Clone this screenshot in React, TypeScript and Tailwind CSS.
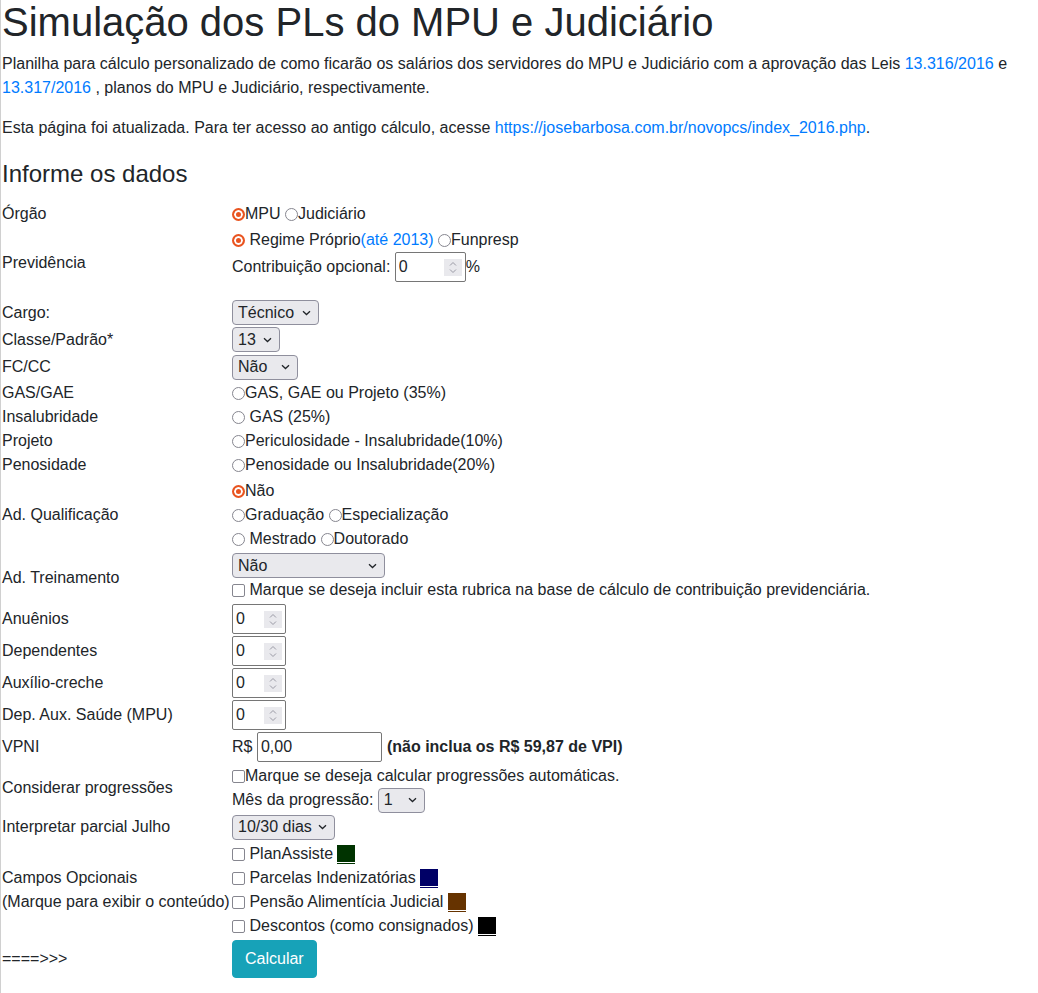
import type { ReactNode } from "react";

const Radio = ({ name, checked }: { name: string; checked?: boolean }) => (
  <input
    type="radio"
    name={name}
    defaultChecked={checked}
    className="m-0 h-[13px] w-[13px] appearance-none rounded-full border-[1.5px] border-[#86868f] bg-white align-middle checked:border-2 checked:border-[#e95420] checked:bg-[#e95420] checked:shadow-[inset_0_0_0_2px_#fff]"
  />
);

const Check = () => (
  <input
    type="checkbox"
    className="m-0 h-[13px] w-[13px] appearance-none rounded-[2px] border-[1.5px] border-[#86868f] bg-white align-middle"
  />
);

const Chevron = () => (
  <svg width="9" height="6" viewBox="0 0 9 6" className="pointer-events-none absolute right-[8px] top-1/2 -translate-y-1/2">
    <path d="M1 1.2l3.5 3.3 3.5-3.3" fill="none" stroke="#212529" strokeWidth="1.3" />
  </svg>
);

const Select = ({ value, width, options }: { value: string; width: string; options: string[] }) => (
  <span className="relative inline-block align-middle">
    <select
      defaultValue={value}
      className={`${width} block h-[25px] appearance-none rounded-[4px] border border-[#8f8f9d] bg-[#e9e9ed] pl-[5px] text-[16px] leading-none text-[#212529] outline-none`}
    >
      {options.map((o) => (
        <option key={o}>{o}</option>
      ))}
    </select>
    <Chevron />
  </span>
);

const Spinner = () => (
  <span className="flex h-[17px] w-[18px] items-center justify-center bg-[#e9e9ed]">
    <svg width="10" height="13" viewBox="0 0 10 13">
      <path d="M2 4.5l3-3 3 3M2 8.5l3 3 3-3" fill="none" stroke="#9a9aa5" strokeWidth="1" />
    </svg>
  </span>
);

const NumberBox = ({ width }: { width: string }) => (
  <span className={`${width} inline-flex h-[30px] items-center rounded-[2px] border border-[#767676] bg-white pl-[3px] pr-[3px] align-middle`}>
    <input defaultValue="0" className="w-full min-w-0 flex-1 bg-transparent text-[16px] text-[#212529] outline-none" />
    <Spinner />
  </span>
);

const Swatch = ({ color }: { color: string }) => (
  <span className={`${color} inline-block h-[19px] w-[18px] border-b bg-clip-content pb-px align-[-5px]`} />
);

const Row = ({ label, children }: { label: ReactNode; children: ReactNode }) => (
  <>
    <div className="flex items-center">{label}</div>
    <div className="pl-px">{children}</div>
  </>
);

const Line = ({ children }: { children: ReactNode }) => <div className="h-6 whitespace-nowrap">{children}</div>;

export default function App() {
  return (
    <div className="min-h-screen border-l border-[#d0d0d0] bg-white pl-px font-['Liberation_Sans',Arial,sans-serif] text-[16px] leading-6 text-[#212529]">
      <h1 className="mb-2 text-[40px] font-normal leading-[44px]">Simulação dos PLs do MPU e Judiciário</h1>
      <p className="mb-4">
        Planilha para cálculo personalizado de como ficarão os salários dos servidores do MPU e Judiciário com a aprovação das Leis{" "}
        <a className="text-[#007bff]">13.316/2016</a> e <a className="text-[#007bff]">13.317/2016</a> , planos do MPU e Judiciário,
        respectivamente.
      </p>
      <p className="mb-4">
        Esta página foi atualizada. Para ter acesso ao antigo cálculo, acesse{" "}
        <a className="text-[#007bff]">https://josebarbosa.com.br/novopcs/index_2016.php</a>.
      </p>
      <h4 className="mb-[14px] pt-[3px] text-[24px] font-normal leading-[29px]">Informe os dados</h4>

      <div className="grid grid-cols-[229px_1fr]">
        <Row label="Órgão">
          <Line>
            <Radio name="orgao" checked />
            MPU <Radio name="orgao" />
            Judiciário
          </Line>
        </Row>

        <Row label="Previdência">
          <div className="pb-[17px] pt-[2px]">
            <Line>
              <Radio name="prev" checked /> Regime Próprio<a className="text-[#007bff]">(até 2013)</a> <Radio name="prev" />
              Funpresp
            </Line>
            <div className="flex h-[30px] items-center whitespace-nowrap">
              Contribuição opcional:&nbsp;
              <NumberBox width="w-[71px]" />
              %
            </div>
          </div>
        </Row>

        <Row label="Cargo:">
          <div className="flex h-[27px] items-center">
            <Select value="Técnico" width="w-[87px]" options={["Técnico", "Analista"]} />
          </div>
        </Row>
        <Row label="Classe/Padrão*">
          <div className="flex h-[27px] items-center">
            <Select value="13" width="w-[48px]" options={["13", "12", "11"]} />
          </div>
        </Row>
        <Row label="FC/CC">
          <div className="flex h-[28px] items-center">
            <Select value="Não" width="w-[66px]" options={["Não", "FC-1", "FC-2"]} />
          </div>
        </Row>

        <Row label="GAS/GAE">
          <Line>
            <Radio name="grat" />
            GAS, GAE ou Projeto (35%)
          </Line>
        </Row>
        <Row label="Insalubridade">
          <Line>
            <Radio name="grat" /> GAS (25%)
          </Line>
        </Row>
        <Row label="Projeto">
          <Line>
            <Radio name="grat" />
            Periculosidade - Insalubridade(10%)
          </Line>
        </Row>
        <Row label="Penosidade">
          <Line>
            <Radio name="grat" />
            Penosidade ou Insalubridade(20%)
          </Line>
        </Row>

        <Row label="Ad. Qualificação">
          <div className="py-[2px]">
            <Line>
              <Radio name="aq" checked />
              Não
            </Line>
            <Line>
              <Radio name="aq" />
              Graduação <Radio name="aq" />
              Especialização
            </Line>
            <Line>
              <Radio name="aq" /> Mestrado <Radio name="aq" />
              Doutorado
            </Line>
          </div>
        </Row>

        <Row label="Ad. Treinamento">
          <div className="pb-px">
            <div className="flex h-[25px] items-center">
              <Select value="Não" width="w-[153px]" options={["Não", "1%", "2%", "3%"]} />
            </div>
            <Line>
              <Check /> Marque se deseja incluir esta rubrica na base de cálculo de contribuição previdenciária.
            </Line>
          </div>
        </Row>

        {["Anuênios", "Dependentes", "Auxílio-creche", "Dep. Aux. Saúde (MPU)"].map((label) => (
          <Row key={label} label={label}>
            <div className="flex h-[32px] items-center">
              <NumberBox width="w-[54px]" />
            </div>
          </Row>
        ))}

        <Row label="VPNI">
          <div className="flex h-[32px] items-center whitespace-nowrap">
            R$&nbsp;
            <input
              defaultValue="0,00"
              className="h-[30px] w-[125px] rounded-[2px] border border-[#767676] bg-white pl-[3px] text-[16px] text-[#212529] outline-none"
            />
            <b className="ml-[5px]">(não inclua os R$ 59,87 de VPI)</b>
          </div>
        </Row>

        <Row label="Considerar progressões">
          <div className="py-px">
            <Line>
              <Check />
              Marque se deseja calcular progressões automáticas.
            </Line>
            <div className="flex h-6 items-center whitespace-nowrap">
              Mês da progressão:&nbsp;
              <Select value="1" width="w-[47px]" options={["1", "2", "3"]} />
            </div>
          </div>
        </Row>

        <Row label="Interpretar parcial Julho">
          <div className="flex h-[28px] items-center">
            <Select value="10/30 dias" width="w-[103px]" options={["10/30 dias", "Integral"]} />
          </div>
        </Row>

        <Row
          label={
            <div>
              <div>Campos Opcionais</div>
              <div className="whitespace-nowrap">(Marque para exibir o conteúdo)</div>
            </div>
          }
        >
          <div className="py-px">
            <Line>
              <Check /> PlanAssiste <Swatch color="bg-[#003300] border-[#003300]" />
            </Line>
            <Line>
              <Check /> Parcelas Indenizatórias <Swatch color="bg-[#000066] border-[#000066]" />
            </Line>
            <Line>
              <Check /> Pensão Alimentícia Judicial <Swatch color="bg-[#663300] border-[#663300]" />
            </Line>
            <Line>
              <Check /> Descontos (como consignados) <Swatch color="bg-[#000000] border-[#000000]" />
            </Line>
          </div>
        </Row>

        <Row label="====>>>">
          <div className="flex h-[40px] items-center">
            <button className="h-[38px] rounded-[4px] border border-[#17a2b8] bg-[#17a2b8] px-3 text-[16px] text-white">Calcular</button>
          </div>
        </Row>
      </div>
    </div>
  );
}
